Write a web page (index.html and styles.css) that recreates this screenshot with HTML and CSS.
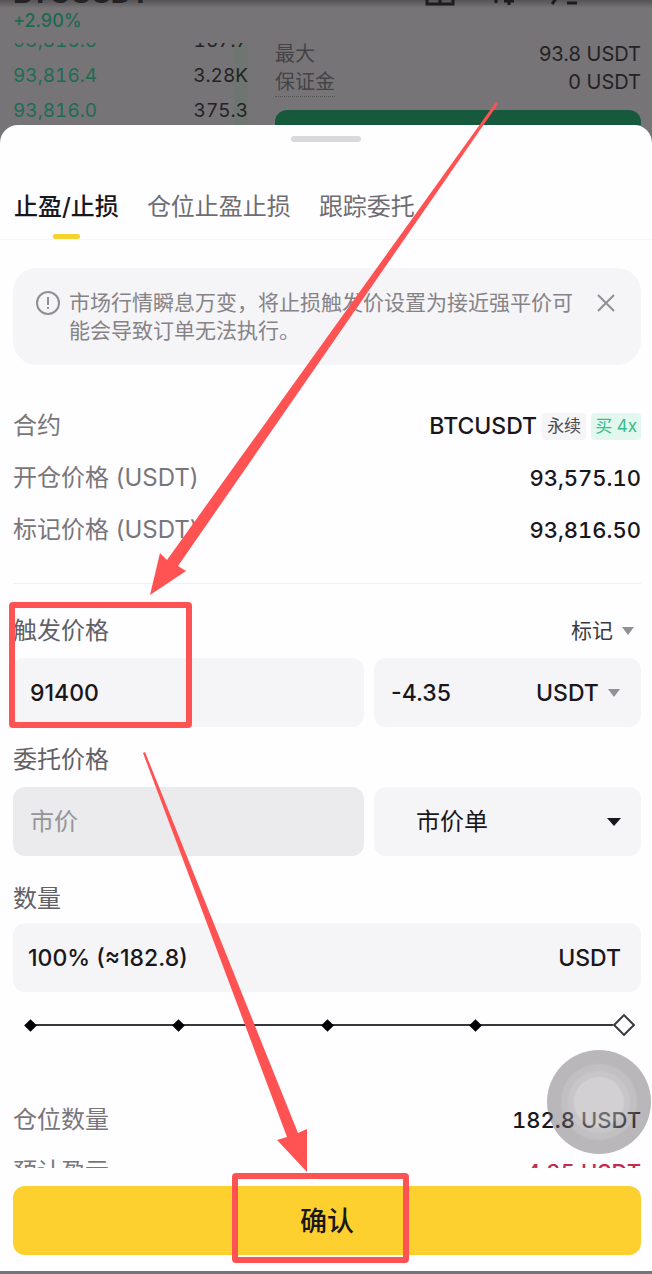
FILE: index.html
```html
<!DOCTYPE html>
<html lang="zh-CN">
<head>
    <meta charset="UTF-8">
    <meta name="viewport" content="width=device-width, initial-scale=1.0">
    <title>止盈/止损</title>
    <link rel="stylesheet" href="styles.css">
</head>
<body>
    <div class="screen">
        <!-- 背景交易页 -->
        <div class="backdrop">
            <div class="pair-bar">
                <span class="pair-name">BTCUSDT</span>
                <span class="pair-type">永续</span>
                <span class="pair-icons">
                    <svg width="30" height="24" viewBox="0 0 30 24"><path d="M2 1h26v19H2zM15 1v19M2 13h26"/></svg>
                    <svg width="30" height="24" viewBox="0 0 30 24"><path d="M9 2v17M22 2v19M17 17h10"/></svg>
                    <svg width="30" height="24" viewBox="0 0 30 24"><path d="M12 2v6L3 20M18 19h10"/></svg>
                </span>
            </div>
            <div class="change">+2.90%</div>
            <div class="trade">
                <div class="book">
                    <div class="book-row"><span class="bid">93,815.6</span><span>167.7</span></div>
                    <div class="book-row"><span class="bid">93,816.4</span><span>3.28K</span></div>
                    <div class="book-row"><span class="bid">93,816.0</span><span>375.3</span></div>
                </div>
                <div class="order">
                    <div class="order-row"><span class="order-label">最大</span><span>93.8 USDT</span></div>
                    <div class="order-row"><span class="order-label dotted">保证金</span><span>0 USDT</span></div>
                    <div class="buy-bar"></div>
                </div>
            </div>
        </div>

        <!-- 止盈止损弹层 -->
        <main class="sheet">
            <div class="handle"></div>
            <nav class="tabs">
                <button class="tab active" type="button">止盈/止损</button>
                <button class="tab" type="button">仓位止盈止损</button>
                <button class="tab" type="button">跟踪委托</button>
            </nav>

            <div class="content">
                <div class="notice">
                    <svg class="notice-icon" width="26" height="26" viewBox="0 0 26 26"><circle cx="13" cy="14" r="11"/><path d="M13 8v8M13 18v2"/></svg>
                    <p>市场行情瞬息万变，将止损触发价设置为接近强平价可能会导致订单无法执行。</p>
                    <button class="close" type="button" aria-label="关闭">
                        <svg width="20" height="20" viewBox="0 0 20 20"><path d="M2 2l16 16M18 2L2 18"/></svg>
                    </button>
                </div>

                <div class="row">
                    <span>合约</span>
                    <span class="value contract">BTCUSDT <span class="tag">永续</span><span class="tag buy">买 4x</span></span>
                </div>
                <div class="row"><span>开仓价格 (USDT)</span><span class="value">93,575.10</span></div>
                <div class="row"><span>标记价格 (USDT)</span><span class="value">93,816.50</span></div>

                <hr class="divider">

                <div class="field-head">
                    <label for="trigger">触发价格</label>
                    <span class="picker">
                        <select class="small" aria-label="触发类型"><option>标记</option></select>
                        <svg class="caret" width="14" height="10" viewBox="0 0 14 10"><path d="M1 1h12L7 9z"/></svg>
                    </span>
                </div>
                <div class="fields">
                    <div class="field"><input id="trigger" type="text" value="91400"></div>
                    <div class="field">
                        <input type="text" value="-4.35" aria-label="预计盈亏">
                        <span class="picker">
                            <select aria-label="单位"><option>USDT</option></select>
                            <svg class="caret" width="14" height="10" viewBox="0 0 14 10"><path d="M1 1h12L7 9z"/></svg>
                        </span>
                    </div>
                </div>

                <div class="field-head"><label for="price">委托价格</label></div>
                <div class="fields">
                    <div class="field disabled"><input id="price" type="text" placeholder="市价" disabled></div>
                    <div class="field order-type">
                        <select aria-label="委托类型"><option>市价单</option></select>
                        <svg class="caret dark" width="14" height="10" viewBox="0 0 14 10"><path d="M0 1h14L7 9z"/></svg>
                    </div>
                </div>

                <div class="field-head quantity"><label for="amount">数量</label></div>
                <div class="field amount">
                    <input id="amount" type="text" value="100% (≈182.8)">
                    <span>USDT</span>
                </div>

                <div class="slider">
                    <div class="stops"><i></i><i></i><i></i><i></i><i></i></div>
                    <input type="range" min="0" max="100" value="100" aria-label="数量百分比">
                </div>

                <div class="row"><span>仓位数量</span><span class="value">182.8 USDT</span></div>
                <div class="row"><span>预计盈亏</span><span class="value loss">-4.35 USDT</span></div>
            </div>

            <div class="footer">
                <button class="confirm" type="button">确认</button>
            </div>
        </main>

        <div class="assistive"></div>

        <!-- 操作步骤标注 -->
        <svg class="marks" width="652" height="1274" viewBox="0 0 652 1274">
            <rect x="12" y="605" width="177" height="120" rx="1"/>
            <rect x="235" y="1176" width="171" height="84" rx="1"/>
            <path d="M496 102L498 104L178 566L186 571L150 595L160 553L167 560Z"/>
            <path d="M143 753L145 752L298 1133L307 1129L307 1172L277 1140L287 1137Z"/>
        </svg>
    </div>
</body>
</html>
```
FILE: styles.css
```css
* {
    box-sizing: border-box;
}
body {
    margin: 0;
    font-family: Inter, "Noto Sans CJK SC", sans-serif;
    font-size: 24px;
    color: #19171b;
    background-color: #777477;
}
button, input, select {
    font: inherit;
    color: inherit;
    background: none;
    border: none;
    padding: 0;
    margin: 0;
}
select {
    appearance: none;
}
svg {
    flex: none;
}
.screen {
    position: relative;
    display: flex;
    flex-direction: column;
    height: 100vh;
    padding-bottom: 3px;
    overflow: hidden;
}

/* 背景交易页 */
.backdrop {
    flex: none;
    height: 125px;
    font-size: 20px;
    color: #242225;
    background: linear-gradient(#555355, #777477 8px);
}
.pair-bar {
    display: flex;
    align-items: flex-end;
    height: 8px;
    padding: 0 73px 0 13px;
    overflow: hidden;
    line-height: 38px;
}
.pair-name {
    font-size: 29px;
    font-weight: 700;
    line-height: 30px;
}
.pair-type {
    margin-left: 16px;
    color: #403e41;
}
.pair-icons {
    display: flex;
    gap: 32px;
    margin-left: auto;
}
.pair-icons path {
    fill: none;
    stroke: #1d1b1e;
    stroke-width: 3;
}
.change {
    padding-left: 13px;
    height: 35px;
    font-size: 18px;
    font-weight: 500;
    line-height: 26px;
    color: #1b6a50;
}
.trade {
    display: flex;
    justify-content: space-between;
    gap: 27px;
    height: 82px;
    padding: 0 11px 0 13px;
    overflow: hidden;
}
.book {
    display: flex;
    flex-direction: column;
    justify-content: flex-end;
    width: 235px;
    margin-bottom: -3px;
    font-size: 19px;
    font-variant-numeric: tabular-nums;
    background: linear-gradient(to left, #6f7671 14px, transparent 14px);
}
.book-row {
    display: flex;
    flex: none;
    justify-content: space-between;
    line-height: 35px;
}
.bid {
    color: #1f6b53;
}
.order {
    flex: 1;
    margin-top: -3px;
}
.order-row {
    display: flex;
    justify-content: space-between;
    line-height: 28px;
}
.order-label {
    color: #454346;
}
.order-label.dotted {
    border-bottom: 1px dotted #555356;
}
.buy-bar {
    height: 40px;
    margin-top: 13px;
    border-radius: 12px;
    background-color: #17593d;
}

/* 弹层 */
.sheet {
    display: flex;
    flex: 1;
    flex-direction: column;
    min-height: 0;
    border-radius: 18px 18px 0 0;
    background-color: #fefdff;
}
.handle {
    flex: none;
    width: 70px;
    height: 6px;
    margin: 11px auto 0;
    border-radius: 3px;
    background-color: #d9d8da;
}
.tabs {
    display: flex;
    flex: none;
    gap: 28px;
    margin-top: 42px;
    padding: 0 14px;
    border-bottom: 1px solid #f5f4f6;
}
.tab {
    display: flex;
    flex-direction: column;
    align-items: center;
    height: 55px;
    line-height: 46px;
    color: #6f6d71;
}
.tab.active {
    font-weight: 500;
    color: #19171b;
}
.tab.active::after {
    content: "";
    width: 27px;
    height: 5px;
    margin-top: 4px;
    border-radius: 2px;
    background-color: #f5d22e;
}
.content {
    flex: 1;
    min-height: 0;
    padding: 28px 11px 0 13px;
    overflow: hidden;
}
.notice {
    display: flex;
    margin-bottom: 34px;
    padding: 21px 25px 20px 22px;
    border-radius: 24px;
    background-color: #f5f4f6;
    font-size: 21px;
    line-height: 28px;
    color: #858387;
}
.notice p {
    flex: 1;
    margin: 0 19px 0 8px;
}
.notice path, .notice circle {
    fill: none;
    stroke: #918f93;
    stroke-width: 2;
}
.close {
    height: 28px;
    line-height: 0;
}
.row {
    display: flex;
    align-items: baseline;
    justify-content: space-between;
    height: 52px;
    line-height: 53px;
    color: #78767a;
}
.value {
    font-size: 22px;
    font-weight: 500;
    font-variant-numeric: tabular-nums;
    color: #19171b;
}
.contract {
    display: flex;
    align-items: center;
    gap: 5px;
    font-size: 23px;
}
.tag {
    padding: 0 5px;
    border-radius: 4px;
    font-size: 17px;
    font-weight: 400;
    line-height: 27px;
    color: #4c4a4e;
    background-color: #f5f4f6;
}
.tag.buy {
    padding: 0 4px;
    color: #35bd8b;
    background-color: #e2f8ef;
}
.loss {
    color: #c22c50;
}
.divider {
    height: 1px;
    margin: 28px 0 25px;
    border: none;
    background-color: #f0eff1;
}
.field-head {
    display: flex;
    align-items: center;
    justify-content: space-between;
    height: 44px;
    margin-bottom: 5px;
    line-height: 44px;
    color: #626064;
}
.fields {
    display: grid;
    grid-template-columns: 351fr 267fr;
    gap: 10px;
    margin-bottom: 11px;
}
.field {
    display: flex;
    align-items: center;
    height: 69px;
    padding: 0 20px 0 17px;
    border-radius: 12px;
    background-color: #f5f4f6;
    font-size: 23px;
    font-weight: 500;
}
.field input {
    flex: 1;
    width: 0;
    height: 67px;
    outline: none;
}
.field.disabled {
    background-color: #ebeaec;
}
.field.disabled input {
    font-size: 24px;
    font-weight: 400;
}
.field input::placeholder {
    color: #969498;
}
.field.order-type {
    justify-content: space-between;
    padding-left: 42px;
    font-size: 24px;
    font-weight: 400;
}
.field.amount {
    padding-left: 15px;
}
.field-head.quantity {
    margin-top: 21px;
    margin-bottom: 2px;
}
.picker {
    display: flex;
    align-items: center;
    gap: 8px;
}
.picker .small {
    font-size: 21px;
    color: #3c3a3e;
}
.field-head .picker {
    padding-right: 6px;
}
.caret {
    fill: #929094;
}
.caret.dark {
    fill: #19171b;
}

/* 百分比滑块 */
.slider {
    position: relative;
    height: 24px;
    margin: 21px 9px 56px;
    background: linear-gradient(#38363a, #38363a) center / calc(100% - 16px) 2px no-repeat;
}
.stops {
    display: flex;
    align-items: center;
    justify-content: space-between;
    height: 24px;
    padding: 0 4px;
}
.stops i {
    width: 9px;
    height: 9px;
    background-color: #000;
    transform: rotate(45deg);
}
.slider input {
    position: absolute;
    inset: 0;
    width: 100%;
    appearance: none;
}
.slider input::-webkit-slider-thumb {
    appearance: none;
    width: 16px;
    height: 16px;
    border: 2px solid #38363a;
    background-color: #fefdff;
    transform: rotate(45deg);
}

.footer {
    flex: none;
    padding: 18px 11px 16px 13px;
}
.confirm {
    width: 100%;
    height: 69px;
    padding-bottom: 3px;
    border-radius: 12px;
    font-size: 27px;
    font-weight: 500;
    background-color: #fdd02f;
}

/* 悬浮按钮与标注 */
.assistive {
    position: absolute;
    right: 1px;
    bottom: 120px;
    width: 104px;
    height: 104px;
    border-radius: 50%;
    background: radial-gradient(circle, rgba(176, 173, 177, 0.56) 24px, rgba(146, 142, 147, 0.5) 26px 30px, rgba(128, 124, 129, 0.48) 32px 37px, rgba(98, 93, 99, 0.44) 39px);
}
.marks {
    position: absolute;
    top: 0;
    left: 0;
    pointer-events: none;
}
.marks rect {
    fill: none;
    stroke: #ff5252;
    stroke-width: 6;
}
.marks path {
    fill: #ff5252;
}
```
